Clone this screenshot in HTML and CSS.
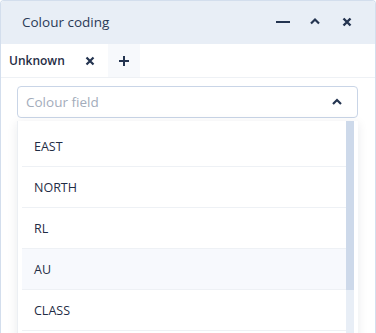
FILE: index.html
```html
<!DOCTYPE html>
<html lang="en">
<head>
    <meta charset="UTF-8">
    <title>Colour coding</title>
    <link rel="stylesheet" href="styles.css">
</head>
<body>
    <div class="panel">
        <div class="panel-header">
            <span class="panel-title">Colour coding</span>
            <div class="panel-actions">
                <svg class="icon" width="16" height="16" viewBox="0 0 16 16"><path d="M1 8h14" stroke="#243450" stroke-width="2.2"/></svg>
                <svg class="icon" width="16" height="16" viewBox="0 0 16 16"><path d="M4 9.5l4-4 4 4" stroke="#243450" stroke-width="2.2" fill="none"/></svg>
                <svg class="icon" width="16" height="16" viewBox="0 0 16 16"><path d="M4.5 4.5l7 7M11.5 4.5l-7 7" stroke="#243450" stroke-width="2.4"/></svg>
            </div>
        </div>

        <div class="tabs">
            <div class="tab active">
                <span>Unknown</span>
                <svg width="10" height="10" viewBox="0 0 10 10"><path d="M1.5 1.5l7 7M8.5 1.5l-7 7" stroke="#243450" stroke-width="2.2"/></svg>
            </div>
            <div class="tab add">
                <svg width="12" height="12" viewBox="0 0 12 12"><path d="M6 1v10M1 6h10" stroke="#243450" stroke-width="2"/></svg>
            </div>
        </div>

        <div class="body">
            <div class="select">
                <span class="placeholder">Colour field</span>
                <svg width="12" height="10" viewBox="0 0 12 10"><path d="M2 7l4-4 4 4" stroke="#243450" stroke-width="2.2" fill="none"/></svg>
            </div>
            <div class="menu">
                <ul class="options">
                    <li>EAST</li>
                    <li>NORTH</li>
                    <li>RL</li>
                    <li class="hover">AU</li>
                    <li>CLASS</li>
                </ul>
                <div class="scrollbar"><div class="thumb"></div></div>
            </div>
        </div>
    </div>
</body>
</html>
```

FILE: styles.css
```css
* {
    box-sizing: border-box;
}

body {
    margin: 0;
    font-family: "Open Sans", "Noto Sans", sans-serif;
    color: #1f2d45;
    background: #ffffff;
    overflow: hidden;
}

.panel {
    width: 376px;
    height: 333px;
    border: 1px solid #d3deed;
    border-bottom: none;
    border-radius: 4px 4px 0 0;
    overflow: hidden;
    display: flex;
    flex-direction: column;
}

.panel-header {
    height: 43px;
    background: #e8eef6;
    display: flex;
    align-items: center;
    padding: 0 20px 0 21px;
    flex-shrink: 0;
}

.panel-title {
    font-size: 13.5px;
    color: #2a3a56;
    flex: 1;
    margin-top: -1px;
}

.panel-actions {
    display: flex;
    gap: 16px;
    align-items: center;
    margin-top: -1px;
}

.icon {
    display: block;
}

.tabs {
    height: 34px;
    display: flex;
    border-bottom: 1px solid #eef1f5;
    flex-shrink: 0;
}

.tab {
    display: flex;
    align-items: center;
}

.tab.active {
    width: 107px;
    padding: 0 0 0 8px;
    font-size: 12px;
    font-weight: 600;
    color: #1f2d45;
    gap: 20px;
}

.tab.add {
    width: 32px;
    justify-content: center;
    background: #f7f9fc;
}

.body {
    padding: 8px 17px 0 16px;
    flex: 1;
}

.select {
    height: 32px;
    border: 1px solid #c9d5e7;
    border-radius: 4px;
    display: flex;
    align-items: center;
    justify-content: space-between;
    padding: 0 14px 0 8px;
}

.placeholder {
    font-size: 13.5px;
    color: #a3acbb;
}

.menu {
    margin-top: 3px;
    height: 220px;
    display: flex;
    background: #ffffff;
    border-left: 1px solid #eceff3;
    padding-left: 4px;
    padding-right: 4px;
    box-shadow: 0 2px 10px rgba(20, 30, 50, 0.09);
}

.options {
    list-style: none;
    margin: 0;
    padding: 5px 0 0;
    flex: 1;
}

.options li {
    height: 41px;
    line-height: 41px;
    padding-left: 12px;
    font-size: 12.5px;
    border-bottom: 1px solid #eef1f5;
}

.options li.hover {
    background: #f7f9fd;
}

.scrollbar {
    width: 8px;
    background: #e8eef6;
}

.thumb {
    height: 169px;
    background: #cdd9ea;
}
```
